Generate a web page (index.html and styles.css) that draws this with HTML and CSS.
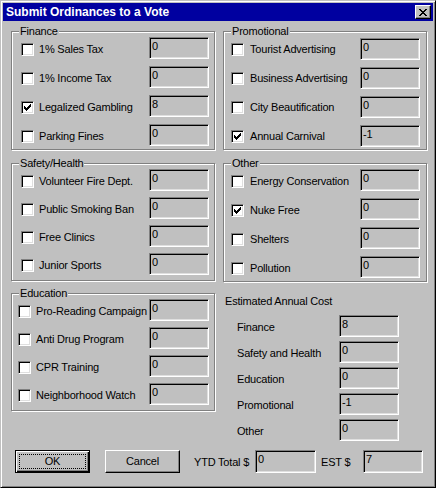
FILE: index.html
```html
<!DOCTYPE html>
<html>
<head>
<meta charset="utf-8">
<title>Submit Ordinances to a Vote</title>
<link rel="stylesheet" href="styles.css">
</head>
<body>
<div class="window">
  <div class="titlebar">
    <span class="title">Submit Ordinances to a Vote</span>
    <span class="close-btn"><svg width="8" height="7" viewBox="0 0 8 7" shape-rendering="crispEdges"><path d="M0 0h2v1H0zM6 0h2v1H6zM1 1h2v1H1zM5 1h2v1H5zM2 2h4v1H2zM3 3h2v1H3zM2 4h4v1H2zM1 5h2v1H1zM5 5h2v1H5zM0 6h2v1H0zM6 6h2v1H6z" fill="#000"/></svg></span>
  </div>
  <div class="dialog-body">
    <div class="columns">
      <div class="col">
        <div class="group group-finance">
          <span class="group-label">Finance</span>
          <div class="rows">
            <div class="row"><span class="check"></span><span class="label">1% Sales Tax</span><span class="field">0</span></div>
            <div class="row"><span class="check"></span><span class="label">1% Income Tax</span><span class="field">0</span></div>
            <div class="row"><span class="check"><svg class="tick" viewBox="1 1 11 11" shape-rendering="crispEdges"><path d="M9 3h1v1H9zM8 4h2v1H8zM3 5h1v1H3zM7 5h3v1H7zM3 6h2v1H3zM6 6h3v1H6zM3 7h5v1H3zM4 8h3v1H4zM5 9h1v1H5z" fill="#000"/></svg></span><span class="label">Legalized Gambling</span><span class="field">8</span></div>
            <div class="row"><span class="check"></span><span class="label">Parking Fines</span><span class="field">0</span></div>
          </div>
        </div>
        <div class="group group-safety">
          <span class="group-label">Safety/Health</span>
          <div class="rows">
            <div class="row"><span class="check"></span><span class="label">Volunteer Fire Dept.</span><span class="field">0</span></div>
            <div class="row"><span class="check"></span><span class="label">Public Smoking Ban</span><span class="field">0</span></div>
            <div class="row"><span class="check"></span><span class="label">Free Clinics</span><span class="field">0</span></div>
            <div class="row"><span class="check"></span><span class="label">Junior Sports</span><span class="field">0</span></div>
          </div>
        </div>
        <div class="group group-education">
          <span class="group-label">Education</span>
          <div class="rows">
            <div class="row"><span class="check"></span><span class="label">Pro-Reading Campaign</span><span class="field">0</span></div>
            <div class="row"><span class="check"></span><span class="label">Anti Drug Program</span><span class="field">0</span></div>
            <div class="row"><span class="check"></span><span class="label">CPR Training</span><span class="field">0</span></div>
            <div class="row"><span class="check"></span><span class="label">Neighborhood Watch</span><span class="field">0</span></div>
          </div>
        </div>
      </div>
      <div class="col">
        <div class="group group-right group-promo">
          <span class="group-label">Promotional</span>
          <div class="rows">
            <div class="row"><span class="check"></span><span class="label">Tourist Advertising</span><span class="field">0</span></div>
            <div class="row"><span class="check"></span><span class="label">Business Advertising</span><span class="field">0</span></div>
            <div class="row"><span class="check"></span><span class="label">City Beautification</span><span class="field">0</span></div>
            <div class="row"><span class="check"><svg class="tick" viewBox="1 1 11 11" shape-rendering="crispEdges"><path d="M9 3h1v1H9zM8 4h2v1H8zM3 5h1v1H3zM7 5h3v1H7zM3 6h2v1H3zM6 6h3v1H6zM3 7h5v1H3zM4 8h3v1H4zM5 9h1v1H5z" fill="#000"/></svg></span><span class="label">Annual Carnival</span><span class="field">-1</span></div>
          </div>
        </div>
        <div class="group group-right group-other">
          <span class="group-label">Other</span>
          <div class="rows">
            <div class="row"><span class="check"></span><span class="label">Energy Conservation</span><span class="field">0</span></div>
            <div class="row"><span class="check"><svg class="tick" viewBox="1 1 11 11" shape-rendering="crispEdges"><path d="M9 3h1v1H9zM8 4h2v1H8zM3 5h1v1H3zM7 5h3v1H7zM3 6h2v1H3zM6 6h3v1H6zM3 7h5v1H3zM4 8h3v1H4zM5 9h1v1H5z" fill="#000"/></svg></span><span class="label">Nuke Free</span><span class="field">0</span></div>
            <div class="row"><span class="check"></span><span class="label">Shelters</span><span class="field">0</span></div>
            <div class="row"><span class="check"></span><span class="label">Pollution</span><span class="field">0</span></div>
          </div>
        </div>
        <div class="estimate">
          <div class="estimate-title">Estimated Annual Cost</div>
          <div class="est-rows">
            <span class="est-label">Finance</span><span class="field">8</span>
            <span class="est-label">Safety and Health</span><span class="field">0</span>
            <span class="est-label">Education</span><span class="field">0</span>
            <span class="est-label">Promotional</span><span class="field">-1</span>
            <span class="est-label">Other</span><span class="field">0</span>
          </div>
        </div>
      </div>
    </div>
    <div class="footer">
      <button class="btn btn-default" type="button">OK</button>
      <button class="btn btn-cancel" type="button">Cancel</button>
      <span class="foot-label foot-ytd">YTD Total $</span>
      <span class="field foot-field">0</span>
      <span class="foot-label foot-est">EST $</span>
      <span class="field foot-field">7</span>
    </div>
  </div>
</div>
</body>
</html>
```
FILE: styles.css
```css
* { box-sizing: border-box; }
html, body { margin: 0; padding: 0; }
body {
  background: #c0c0c0;
  font-family: "Liberation Sans", Arial, sans-serif;
  font-size: 11px;
  letter-spacing: -0.2px;
  line-height: 15px;
  color: #000;
}
.window {
  width: 436px;
  height: 488px;
  background: #c0c0c0;
  border: 1px solid;
  border-color: #c0c0c0 #000 #000 #c0c0c0;
  box-shadow: inset 1px 1px #fff, inset -1px -1px #808080;
  padding: 2px;
}
.titlebar {
  height: 18px;
  background: #0000a0;
  display: flex;
  align-items: center;
  justify-content: space-between;
  padding: 0 2px 0 3px;
}
.title {
  color: #fff;
  font-family: "Liberation Sans", Arial, sans-serif;
  font-weight: bold;
  font-size: 12px;
  letter-spacing: 0;
  line-height: 18px;
}
.close-btn {
  width: 16px;
  height: 14px;
  background: #c0c0c0;
  border: 1px solid;
  border-color: #fff #000 #000 #fff;
  box-shadow: inset -1px -1px #808080;
  display: flex;
  align-items: center;
  justify-content: center;
}
.close-btn svg { display: block; }
.dialog-body { padding: 10px 0 0 8px; }
.columns {
  display: grid;
  grid-template-columns: 204px 204px;
  column-gap: 8px;
  align-items: start;
}
.group {
  position: relative;
  border: 1px solid #808080;
  box-shadow: inset 1px 1px #fff, 1px 1px #fff;
  padding: 5px 5px 0 9px;
}
.group-label {
  position: absolute;
  top: -8px;
  left: 7px;
  padding: 0 1px;
  background: #c0c0c0;
  line-height: 15px;
  white-space: nowrap;
}
.group-finance { height: 119px; }
.group-safety { height: 118px; margin-top: 13px; }
.group-education { height: 118px; margin-top: 12px; padding-left: 6px; }
.group-right { padding-left: 7px; padding-right: 6px; }
.group-promo { height: 119px; padding-top: 6px; }
.group-other { height: 119px; margin-top: 13px; }
.rows { display: grid; row-gap: 7px; }
.group-safety .rows, .group-education .rows { row-gap: 6px; }
.row {
  display: grid;
  grid-template-columns: 13px minmax(0, 1fr) 60px;
  column-gap: 0;
  align-items: center;
  height: 22px;
}
.label { white-space: nowrap; margin-top: 3px; }
.check {
  width: 13px;
  height: 13px;
  margin-top: 3px;
  background: #fff;
  border: 1px solid;
  border-color: #808080 #fff #fff #808080;
  box-shadow: inset 1px 1px #000, inset -1px -1px #dfdfdf;
}
.row .label { padding-left: 5px; }
.group-right .row .label { padding-left: 6px; }
.group-promo .check, .group-promo .label { margin-top: 0; }
.tick { display: block; width: 11px; height: 11px; }
.field {
  display: block;
  height: 22px;
  background: #c0c0c0;
  border: 1px solid;
  border-color: #808080 #fff #fff #808080;
  box-shadow: inset 1px 1px #000, inset -1px -1px #dfdfdf;
  padding: 1px 0 0 2px;
  line-height: 15px;
  white-space: nowrap;
  overflow: hidden;
}
.estimate { margin-top: 12px; padding-left: 2px; }
.estimate-title { line-height: 15px; }
.est-rows {
  display: grid;
  grid-template-columns: 102px 60px;
  grid-auto-rows: 22px;
  row-gap: 4px;
  align-items: center;
  margin-top: 6px;
  padding-left: 12px;
}
.est-label { white-space: nowrap; margin-top: 3px; }
.footer {
  display: flex;
  align-items: center;
  margin-top: 9px;
  padding-left: 4px;
  height: 23px;
}
.btn {
  position: relative;
  width: 75px;
  height: 23px;
  padding: 0;
  margin: 0;
  font: inherit;
  letter-spacing: inherit;
  color: #000;
  background: #c0c0c0;
  border: 1px solid;
  cursor: default;
}
.btn-default {
  border-color: #000;
  box-shadow: inset 1px 1px #fff, inset -1px -1px #000, inset -2px -2px #808080;
}
.btn-default::after {
  content: "";
  position: absolute;
  top: 3px;
  left: 3px;
  right: 3px;
  bottom: 3px;
  border: 1px dotted #000;
}
.btn-cancel {
  margin-left: 15px;
  border-color: #fff #000 #000 #fff;
  box-shadow: inset -1px -1px #808080;
}
.foot-label { white-space: nowrap; margin-top: 2px; }
.foot-ytd { width: 61px; margin-left: 14px; }
.foot-est { width: 42px; margin-left: 5px; }
.foot-field { height: 23px; width: 61px; }
.foot-field:last-child { width: 60px; }
```
